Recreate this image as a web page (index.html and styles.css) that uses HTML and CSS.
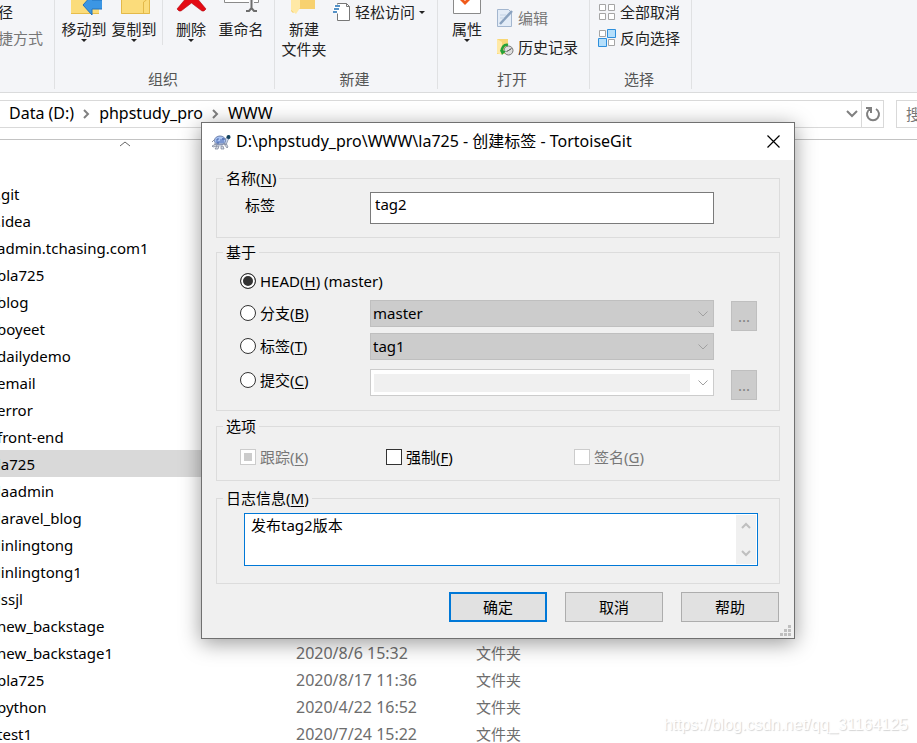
FILE: index.html
```
<!DOCTYPE html>
<html lang="zh-CN">
<head>
    <meta charset="UTF-8">
    <meta name="viewport" content="width=device-width, initial-scale=1.0">
    <title>创建标签 - TortoiseGit</title>
    <link rel="stylesheet" href="styles.css">
</head>
<body>

<!-- Ribbon -->
<header class="ribbon">
    <section class="group group-clipboard">
        <div class="group-body">
            <div class="small-list tight clipped">
                <button class="small-btn">径</button>
                <button class="small-btn muted">捷方式</button>
            </div>
        </div>
    </section>

    <section class="group group-organize">
        <div class="group-body">
            <button class="big-btn">
                <svg class="big-icon" width="36" height="20" viewBox="0 0 36 20">
                    <path d="M5 0h28v15H5z" fill="#fbdc7b"/>
                    <path d="M5 14h28v1H5z" fill="#e8bd4b"/>
                    <path d="M17 6 26-4v5h11v9H26v6z" fill="#3b96e4" stroke="#2273bd"/>
                </svg>
                <span>移动到</span>
                <i class="caret"></i>
            </button>
            <button class="big-btn">
                <svg class="big-icon" width="36" height="20" viewBox="0 0 36 20">
                    <path d="M5 0h29v15H5z" fill="#fbdc7b"/>
                    <path d="M5.500 0v14.500h28V0M27.500 14V3l3-2" fill="none" stroke="#e3b94a"/>
                </svg>
                <span>复制到</span>
                <i class="caret"></i>
            </button>
            <div class="divider"></div>
            <button class="big-btn">
                <svg class="big-icon" width="36" height="20" viewBox="0 0 36 20">
                    <path d="M4 10 14-2h9l10 12-2 2h-2L18.500 4 8 12H6z" fill="#e40b14" stroke="#b20810" stroke-width=".6"/>
                </svg>
                <span>删除</span>
                <i class="caret"></i>
            </button>
            <button class="big-btn">
                <svg class="big-icon" width="36" height="20" viewBox="0 0 36 20">
                    <path d="M1.500-1v4.500h34V-1" fill="#fff" stroke="#8a8a8a"/>
                    <path d="M26-2h5v14h-5z" fill="#f4f5f8"/>
                    <path d="M28.500-1v10M23 12h3l2.500-3 2.500 3h3" fill="none" stroke="#6d6d6d" stroke-width="2"/>
                </svg>
                <span>重命名</span>
            </button>
        </div>
        <h2 class="group-name">组织</h2>
    </section>

    <section class="group group-new">
        <div class="group-body">
            <button class="big-btn">
                <svg class="big-icon" width="36" height="20" viewBox="0 0 36 20">
                    <path d="M5 0h24v10H12l-5 4-2-2z" fill="#f7d170"/>
                    <path d="M5 0h9v9l-4 6-5-4z" fill="#ffe9a6"/>
                </svg>
                <span>新建<br>文件夹</span>
            </button>
            <div class="small-list">
                <button class="small-btn easy">
                    <svg width="18" height="20" viewBox="0 0 18 20">
                        <path d="M4.500 1.500h9l3 3v14h-12z" fill="#fff" stroke="#777"/>
                        <path d="M13.500 1.500v3h3" fill="none" stroke="#777"/>
                        <path d="M1 4h6M0 7h6M2 10h4" stroke="#fff" stroke-width="3"/>
                        <path d="M2 4h5M1 7h5M0 10h4" stroke="#1f6fb5" stroke-width="1.500"/>
                    </svg>
                    轻松访问
                    <i class="caret"></i>
                </button>
            </div>
        </div>
        <h2 class="group-name">新建</h2>
    </section>

    <section class="group group-open">
        <div class="group-body">
            <button class="big-btn">
                <svg class="big-icon" width="36" height="20" viewBox="0 0 36 20">
                    <path d="M4.500-1v15.500h27V-1" fill="#fff" stroke="#8a8a8a"/>
                    <path d="M10 0h12l-6 6z" fill="#f05a1a"/>
                    <path d="M14 0h4l-2 2z" fill="#fff"/>
                </svg>
                <span>属性</span>
                <i class="caret"></i>
            </button>
            <div class="small-list loose">
                <button class="small-btn muted">
                    <svg width="18" height="20" viewBox="0 0 18 20">
                        <path d="M1.500 1.500h11l3 3v14h-14z" fill="#e3ecf7" stroke="#a3b6cf"/>
                        <path d="M4 16 16 3" stroke="#8aa2bf" stroke-width="2.500"/>
                        <path d="M4 7h6M4 10h4" stroke="#c3d2e4"/>
                    </svg>
                    编辑
                </button>
                <button class="small-btn">
                    <svg width="18" height="20" viewBox="0 0 18 20">
                        <path d="M1 2h11v15H1z" fill="#f8d775"/>
                        <path d="M1 2l5 3v13l-5-2z" fill="#ffe9a6"/>
                        <circle cx="12.500" cy="13.500" r="4.500" fill="#ddd" stroke="#777"/>
                        <path d="M12.500 13.500l3-2M12.500 13.500l-2 1" stroke="#444"/>
                        <path d="M6 15c-1-4 2-8 6-7" fill="none" stroke="#25a238" stroke-width="2.500"/>
                        <path d="M4 13l2 5 4-4z" fill="#25a238"/>
                    </svg>
                    历史记录
                </button>
            </div>
        </div>
        <h2 class="group-name">打开</h2>
    </section>

    <section class="group group-select">
        <div class="group-body">
            <div class="small-list tight">
                <button class="small-btn">
                    <svg width="18" height="18" viewBox="0 0 18 18" fill="#fff" stroke="#a5a5a5">
                        <path d="M1.500 1.500h6v6h-6zM10.500 1.500h6v6h-6zM1.500 10.500h6v6h-6zM10.500 10.500h6v6h-6z"/>
                    </svg>
                    全部取消
                </button>
                <button class="small-btn">
                    <svg width="18" height="18" viewBox="0 0 18 18" fill="#fff" stroke="#a5a5a5">
                        <path d="M1.500 1.500h6v6h-6zM10.500 10.500h6v6h-6z"/>
                        <path d="M9.500.5h8v8h-8zM.5 9.500h8v8h-8z" fill="#b5dffb" stroke="#2e8fdc"/>
                    </svg>
                    反向选择
                </button>
            </div>
        </div>
        <h2 class="group-name">选择</h2>
    </section>
</header>

<!-- Address bar -->
<nav class="address-row">
    <div class="address">
        <a href="#">Data (D:)</a>
        <svg class="crumb" width="7" height="10" viewBox="0 0 7 10"><path d="M1 1l4 4-4 4"/></svg>
        <a href="#">phpstudy_pro</a>
        <svg class="crumb" width="7" height="10" viewBox="0 0 7 10"><path d="M1 1l4 4-4 4"/></svg>
        <a href="#">WWW</a>
        <button class="history-btn" aria-label="历史">
            <svg width="12" height="8" viewBox="0 0 12 8"><path d="M1 1l5 5 5-5"/></svg>
        </button>
        <button class="refresh-btn" aria-label="刷新">
            <svg width="16" height="16" viewBox="0 0 16 16"><path d="M11 3a6 6 0 1 1-6 0M1 2h5v5"/></svg>
        </button>
    </div>
    <div class="search">搜</div>
</nav>

<!-- File list -->
<main class="files">
    <div class="sort-row">
        <svg width="10" height="6" viewBox="0 0 10 6"><path d="M0 5l5-4 5 4" fill="none" stroke="#666"/></svg>
    </div>
    <table class="file-table">
        <tbody>
            <tr><td class="name">.git</td><td class="date"></td><td></td></tr>
            <tr><td class="name">.idea</td><td class="date"></td><td></td></tr>
            <tr><td class="name">admin.tchasing.com1</td><td class="date"></td><td></td></tr>
            <tr><td class="name">bla725</td><td class="date"></td><td></td></tr>
            <tr><td class="name">blog</td><td class="date"></td><td></td></tr>
            <tr><td class="name">boyeet</td><td class="date"></td><td></td></tr>
            <tr><td class="name">dailydemo</td><td class="date"></td><td></td></tr>
            <tr><td class="name">email</td><td class="date"></td><td></td></tr>
            <tr><td class="name">error</td><td class="date"></td><td></td></tr>
            <tr><td class="name">front-end</td><td class="date"></td><td></td></tr>
            <tr class="selected"><td class="name">la725</td><td class="date"></td><td></td></tr>
            <tr><td class="name">laadmin</td><td class="date"></td><td></td></tr>
            <tr><td class="name">laravel_blog</td><td class="date"></td><td></td></tr>
            <tr><td class="name">linlingtong</td><td class="date"></td><td></td></tr>
            <tr><td class="name">linlingtong1</td><td class="date"></td><td></td></tr>
            <tr><td class="name">lssjl</td><td class="date"></td><td></td></tr>
            <tr><td class="name">new_backstage</td><td class="date"></td><td></td></tr>
            <tr><td class="name">new_backstage1</td><td class="date">2020/8/6 15:32</td><td>文件夹</td></tr>
            <tr><td class="name">pla725</td><td class="date">2020/8/17 11:36</td><td>文件夹</td></tr>
            <tr><td class="name">python</td><td class="date">2020/4/22 16:52</td><td>文件夹</td></tr>
            <tr><td class="name">test1</td><td class="date">2020/7/24 15:22</td><td>文件夹</td></tr>
        </tbody>
    </table>
</main>

<!-- Create tag dialog -->
<form class="dialog">
    <div class="title-bar">
        <svg class="turtle" width="20" height="16" viewBox="0 0 20 16">
            <path d="M5 10l-4 2 1 1 4-1zM6 12l-2 3h3l1-3zM10 12v3h3l-1-3zM13 10l3 4 1-1-2-4z" fill="#d5dae6" stroke="#777f92" stroke-width=".7"/>
            <path d="M13 9l2-5 3-3 1 3-2 2-2 5z" fill="#c9d5ec" stroke="#7a859e" stroke-width=".7"/>
            <ellipse cx="9" cy="6.500" rx="5.500" ry="4.500" fill="#a9c3f3" stroke="#7385ad"/>
            <path d="M1 8l3-3M3 10h12" stroke="#8a92a5"/>
            <path d="M8 5H6v4h2V7M10 5v4M12 4v5M11 5h3" fill="none" stroke="#35549f" stroke-width=".8"/>
            <circle cx="17.500" cy="3" r="2" fill="#12425c"/>
        </svg>
        <h1>D:\phpstudy_pro\WWW\la725 - 创建标签 - TortoiseGit</h1>
        <button type="button" class="close-btn" aria-label="关闭">
            <svg width="13" height="13" viewBox="0 0 13 13"><path d="M.5.500l12 12M12.500.500l-12 12" stroke="#000" stroke-width="1.200"/></svg>
        </button>
    </div>

    <div class="dialog-body">
        <fieldset class="name-box">
            <legend>名称(<u>N</u>)</legend>
            <div class="box-content">
                <label for="tag-name">标签</label>
                <input id="tag-name" class="tag-input" type="text" value="tag2">
            </div>
        </fieldset>

        <fieldset class="base-box">
            <legend>基于</legend>
            <div class="box-content">
                <label class="choice head"><input type="radio" name="base" checked><span>HEAD(<u>H</u>) (master)</span></label>

                <label class="choice"><input type="radio" name="base"><span>分支(<u>B</u>)</span></label>
                <div class="combo">
                    <select disabled aria-label="分支"><option>master</option></select>
                    <svg width="10" height="6" viewBox="0 0 10 6"><path d="M.5.500L5 5 9.500.500"/></svg>
                </div>
                <button type="button" class="browse" disabled>...</button>

                <label class="choice"><input type="radio" name="base"><span>标签(<u>T</u>)</span></label>
                <div class="combo">
                    <select disabled aria-label="标签"><option>tag1</option></select>
                    <svg width="10" height="6" viewBox="0 0 10 6"><path d="M.5.500L5 5 9.500.500"/></svg>
                </div>

                <label class="choice commit"><input type="radio" name="base"><span>提交(<u>C</u>)</span></label>
                <div class="combo editable">
                    <input type="text" disabled aria-label="提交">
                    <svg width="10" height="6" viewBox="0 0 10 6"><path d="M.5.500L5 5 9.500.500"/></svg>
                </div>
                <button type="button" class="browse" disabled>...</button>
            </div>
        </fieldset>

        <fieldset class="option-box">
            <legend>选项</legend>
            <div class="box-content">
                <label class="choice off"><input class="mixed" type="checkbox" disabled><span>跟踪(<u>K</u>)</span></label>
                <label class="choice"><input type="checkbox"><span>强制(<u>F</u>)</span></label>
                <label class="choice off"><input type="checkbox" disabled><span>签名(<u>G</u>)</span></label>
            </div>
        </fieldset>

        <fieldset class="message-box">
            <legend><label for="message">日志信息(<u>M</u>)</label></legend>
            <div class="box-content">
                <div class="message">
                    <textarea id="message">发布tag2版本</textarea>
                    <div class="scrollbar">
                        <svg width="10" height="7" viewBox="0 0 10 7"><path d="M1 6l4-4 4 4"/></svg>
                        <svg width="10" height="7" viewBox="0 0 10 7"><path d="M1 1l4 4 4-4"/></svg>
                    </div>
                </div>
            </div>
        </fieldset>

        <div class="actions">
            <button type="button" class="primary">确定</button>
            <button type="button">取消</button>
            <button type="button">帮助</button>
        </div>
    </div>

    <svg class="grip" width="11" height="11" viewBox="0 0 11 11" fill="#bfbfbf">
        <path d="M8 0h3v3H8zM4 4h3v3H4zM8 4h3v3H8zM0 8h3v3H0zM4 8h3v3H4zM8 8h3v3H8z"/>
    </svg>
</form>

<p class="watermark">https://blog.csdn.net/qq_31164125</p>

</body>
</html>
```
FILE: styles.css
```
* {
    box-sizing: border-box;
}

body {
    margin: 0;
    height: 100vh;
    position: relative;
    overflow: hidden;
    background: #fff;
    color: #000;
    font-family: "Noto Sans", "Noto Sans CJK SC", sans-serif;
    font-size: 15px;
    line-height: 20px;
}

button,
input,
select,
textarea {
    font: inherit;
    color: inherit;
    margin: 0;
    padding: 0;
    border: none;
    background: none;
}

h1,
h2,
p {
    margin: 0;
    font-size: inherit;
    font-weight: normal;
}

a {
    color: inherit;
    text-decoration: none;
}

/* Ribbon */
.ribbon {
    display: flex;
    background: #f4f5f8;
    border-bottom: 1px solid #dadbdc;
    color: #222;
}

.group {
    display: flex;
    flex-direction: column;
    flex: none;
    padding-bottom: 3px;
    background: linear-gradient(#e0e1e3, #e0e1e3) right top / 1px 89px no-repeat;
}

.group-body {
    display: flex;
    align-items: flex-start;
    height: 69px;
    padding-left: 4px;
}

.group-clipboard {
    width: 55px;
}

.group-clipboard .group-body {
    padding: 0;
}

.group-organize {
    width: 220px;
}

.group-new {
    width: 163px;
}

.group-open {
    width: 152px;
}

.group-select {
    width: 102px;
}

.group-name {
    padding-right: 4px;
    text-align: center;
    color: #555;
}

.big-btn {
    display: flex;
    flex-direction: column;
    align-items: center;
    flex: none;
    width: 50px;
    margin-top: -1px;
}

.big-icon {
    flex: none;
    overflow: hidden;
}

.caret {
    flex: none;
    border: 3px solid transparent;
    border-top-color: #222;
    border-bottom: none;
}

.divider {
    width: 1px;
    height: 45px;
    margin: 0 3px;
    background: #e0e1e3;
}

.small-list {
    display: flex;
    flex-direction: column;
    padding: 2px 0 0 4px;
}

.small-list.tight {
    padding-top: 2px;
    gap: 6px;
}

.small-list.loose {
    padding-top: 8px;
    gap: 9px;
}

.small-list.clipped {
    padding: 2px 0 0;
    margin-left: -2px;
}

.small-btn {
    display: flex;
    align-items: center;
    gap: 4px;
    height: 20px;
    white-space: nowrap;
}

.muted {
    color: #777;
}

/* Address bar */
.address-row {
    display: flex;
    gap: 12px;
    padding: 7px 0 11px;
    border-bottom: 1px solid #c3c3c3;
}

.address {
    flex: 1;
    display: flex;
    align-items: center;
    height: 28px;
    padding-left: 9px;
    border: 1px solid #d9d9d9;
    border-left: none;
    font-size: 16px;
}

.address a {
    padding-bottom: 2px;
}

.address svg {
    fill: none;
    stroke: #808080;
    stroke-width: 2;
}

.crumb {
    margin: 0 9px;
}

.history-btn {
    display: flex;
    margin-left: auto;
    margin-right: 3px;
}

.refresh-btn {
    display: flex;
    align-items: center;
    justify-content: center;
    width: 22px;
    height: 26px;
    border-left: 1px solid #d9d9d9;
}

.search {
    width: 21px;
    height: 28px;
    padding: 3px 0 0 9px;
    overflow: hidden;
    border: 1px solid #d9d9d9;
    border-right: none;
    color: #777;
}

/* File list */
.sort-row {
    height: 40px;
    padding: 1px 0 0 120px;
}

.sort-row svg {
    display: block;
}

.file-table {
    width: 76%;
    table-layout: fixed;
    border-collapse: collapse;
}

.file-table td {
    height: 27px;
    padding: 0;
    color: #6d6d6d;
}

.file-table .name {
    width: 296px;
    color: #000;
    text-indent: -3px;
}

.file-table .date {
    width: 180px;
    font-size: 16px;
}

.selected {
    background: #d9d9d9;
}

/* Dialog window */
.dialog {
    position: absolute;
    top: 122px;
    left: 201px;
    width: 594px;
    background: #f0f0f0;
    border: 1px solid #707070;
    box-shadow: 0 4px 20px rgba(0, 0, 0, 0.4);
}

.title-bar {
    display: flex;
    align-items: center;
    height: 37px;
    padding: 0 14px 0 9px;
    background: #fff;
}

.title-bar h1 {
    margin-left: 5px;
    padding-bottom: 2px;
    font-size: 16px;
}

.close-btn {
    display: flex;
    margin-left: auto;
}

.dialog-body {
    padding: 8px 14px 16px;
}

fieldset {
    min-width: 0;
    margin: 0;
    padding: 0;
    border: 1px solid #dcdcdc;
}

legend {
    margin-left: 6px;
    padding: 0 3px;
}

u {
    text-underline-offset: 2px;
}

.name-box {
    margin-bottom: 4px;
}

.name-box .box-content {
    display: grid;
    grid-template-columns: 125px 1fr;
    padding: 4px 65px 13px 28px;
}

.name-box .box-content label {
    padding-top: 3px;
}

.tag-input {
    width: 100%;
    height: 32px;
    padding: 0 4px 8px;
    background: #fff;
    border: 1px solid #7a7a7a;
}

.base-box {
    margin-bottom: 5px;
}

.base-box .box-content {
    display: grid;
    grid-template-columns: 130px 1fr 26px;
    grid-template-rows: 29px 33px 36px 31px;
    align-items: start;
    padding: 9px 22px 10px 23px;
}

.base-box .choice {
    grid-column: 1;
    height: 26px;
}

.base-box .head {
    grid-column: 1 / -1;
    height: 20px;
}

.base-box .commit {
    height: 22px;
}

.choice {
    display: flex;
    align-items: center;
    gap: 4px;
}

.choice input {
    appearance: none;
    flex: none;
    width: 16px;
    height: 16px;
    background: #fff;
    border: 1px solid #333;
}

.choice input[type="radio"] {
    border-radius: 50%;
}

.choice input[type="radio"]:checked {
    background: #333;
    box-shadow: inset 0 0 0 2px #fff;
}

.choice input:disabled {
    border-color: #ccc;
}

.choice .mixed {
    background: #ccc;
    box-shadow: inset 0 0 0 3px #fff;
}

.off {
    color: #777;
}

.combo {
    display: grid;
    grid-template-columns: 1fr 20px;
    align-items: center;
    justify-items: center;
    height: 27px;
    margin-right: 17px;
    background: #ccc;
    border: 1px solid #bfbfbf;
}

.combo select {
    appearance: none;
    grid-area: 1 / 1 / 2 / 3;
    width: 100%;
    height: 25px;
    padding: 0 0 2px 2px;
    opacity: 1;
}

.combo svg {
    grid-area: 1 / 2;
    fill: none;
    stroke: #a0a0a0;
}

.combo.editable {
    background: #fff;
    border-color: #ccc;
}

.combo.editable input {
    justify-self: stretch;
    height: 18px;
    min-width: 0;
    margin: 0 3px;
    background: #f0f0f0;
}

.browse {
    height: 30px;
    margin-top: 1px;
    background: #ccc;
    border: 1px solid #bfbfbf;
    color: #838383;
}

.option-box {
    margin-bottom: 7px;
}

.option-box .box-content {
    display: grid;
    grid-template-columns: 146px 188px 1fr;
    padding: 11px 22px 13px 23px;
}

.message-box {
    margin-bottom: 8px;
}

.message-box .box-content {
    padding: 5px 21px 17px 27px;
}

.message {
    display: flex;
    height: 53px;
    padding: 1px;
    background: #fff;
    border: 1px solid #0078d7;
}

.message textarea {
    flex: 1;
    min-width: 0;
    padding-left: 5px;
    resize: none;
    outline: none;
    overflow: hidden;
}

.scrollbar {
    display: flex;
    flex-direction: column;
    align-items: center;
    justify-content: space-between;
    width: 20px;
    padding: 7px 0;
    background: #f0f0f0;
}

.scrollbar svg {
    fill: none;
    stroke: #bfbfbf;
    stroke-width: 2;
}

.actions {
    display: flex;
    justify-content: flex-end;
    gap: 18px;
    padding-right: 1px;
}

.actions button {
    width: 98px;
    height: 30px;
    background: #e1e1e1;
    border: 1px solid #adadad;
}

.actions .primary {
    border: 2px solid #0078d7;
}

.grip {
    position: absolute;
    right: 3px;
    bottom: 2px;
}

.watermark {
    position: absolute;
    right: 9px;
    bottom: 8px;
    color: #fff;
    font-family: "Liberation Sans", Arial, sans-serif;
    font-size: 16px;
    text-shadow: 1px 1px 1px #d4d4d4;
}
```
